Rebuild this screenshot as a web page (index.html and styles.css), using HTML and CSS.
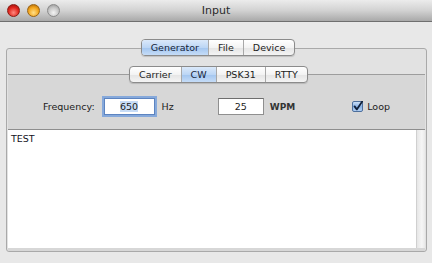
FILE: index.html
```html
<!DOCTYPE html>
<html lang="en">
<head>
    <meta charset="UTF-8">
    <title>Input</title>
    <link rel="stylesheet" href="styles.css">
</head>
<body>
    <div class="window">
        <header class="titlebar">
            <div class="lights">
                <span class="light red"></span>
                <span class="light yellow"></span>
                <span class="light grey"></span>
            </div>
            <div class="title">Input</div>
        </header>

        <main class="content">
            <div class="segmented outer-tabs">
                <span class="seg active">Generator</span>
                <span class="seg">File</span>
                <span class="seg">Device</span>
            </div>
            <div class="tabbox">
                <div class="segmented inner-tabs">
                    <span class="seg">Carrier</span>
                    <span class="seg active">CW</span>
                    <span class="seg">PSK31</span>
                    <span class="seg">RTTY</span>
                </div>
                <div class="panel">
                    <div class="form-row">
                        <label class="lbl freq-lbl">Frequency:</label>
                        <div class="field focused freq-field"><span class="sel">650</span></div>
                        <span class="unit hz">Hz</span>
                        <div class="field wpm-field">25</div>
                        <span class="unit wpm">WPM</span>
                        <div class="check">
                            <svg width="11" height="11" viewBox="0 0 11 11">
                                <defs>
                                    <linearGradient id="cb" x1="0" y1="0" x2="0" y2="1">
                                        <stop offset="0" stop-color="#d3e4f8"/>
                                        <stop offset="0.5" stop-color="#8ab3e6"/>
                                        <stop offset="1" stop-color="#b5d2f4"/>
                                    </linearGradient>
                                </defs>
                                <rect x="0.5" y="0.5" width="10" height="10" rx="1.5" fill="url(#cb)" stroke="#4d6f9c"/>
                                <path d="M2.6 5.4 L4.8 8.4 L10.2 0.6" fill="none" stroke="#10203a" stroke-width="1.8" stroke-linecap="round" stroke-linejoin="round"/>
                            </svg>
                            <span class="lbl">Loop</span>
                        </div>
                    </div>
                    <div class="textarea">
                        <div class="text">TEST</div>
                        <div class="scroll"></div>
                    </div>
                </div>
            </div>
        </main>
    </div>
</body>
</html>
```

FILE: styles.css
```css
/* --- base --- */
body {
    margin: 0;
    font-family: "DejaVu Sans", "Liberation Sans", sans-serif;
    font-size: 9.5px;
    color: #1c1c1c;
}

.window {
    width: 432px;
    height: 263px;
    background: #e8e8e8;
    display: flex;
    flex-direction: column;
    overflow: hidden;
}

/* --- title bar --- */
.titlebar {
    height: 21px;
    background: linear-gradient(#ececec, #d2d2d2 50%, #a9a9a9);
    border-bottom: 1px solid #6f6f6f;
    display: flex;
    align-items: center;
}
.lights {
    display: flex;
    gap: 7px;
    margin-left: 7px;
    margin-top: -1px;
}
.light {
    width: 13px;
    height: 13px;
    border-radius: 50%;
    box-sizing: border-box;
}
.light.red {
    background: radial-gradient(circle at 50% 70%, #ff8a80, #e0241c 55%, #8e0d08);
    border: 1px solid #8a1b14;
}
.light.yellow {
    background: radial-gradient(circle at 50% 70%, #ffe08a, #f2a41a 55%, #a05a06);
    border: 1px solid #9a6412;
}
.light.grey {
    background: radial-gradient(circle at 50% 70%, #f4f4f4, #c4c4c4 55%, #8d8d8d);
    border: 1px solid #8a8a8a;
}
.title {
    flex: 1;
    text-align: center;
    font-size: 11px;
    color: #2a2a2a;
    margin-right: 60px;
    margin-top: -1px;
}

/* --- content --- */
.content {
    flex: 1;
    display: flex;
    flex-direction: column;
    padding: 17px 5px 11px 6px;
}

/* --- segmented controls --- */
.segmented {
    align-self: center;
    display: flex;
    height: 15px;
    border: 1px solid #8b8b8b;
    border-radius: 4px;
    background: linear-gradient(#ffffff, #f3f3f3 50%, #e4e4e4 51%, #f4f4f4);
    box-shadow: 0 1px 1px rgba(0,0,0,0.15);
    position: relative;
    z-index: 1;
    overflow: hidden;
}
.seg {
    padding: 0 9px;
    line-height: 15px;
    border-left: 1px solid #a8a8a8;
    color: #222;
}
.seg:first-child {
    border-left: none;
}
.seg.active {
    background: linear-gradient(#dbe9fa, #bcd6f5 50%, #a2c5ef 51%, #c5dcf7);
    color: #15243a;
}
.outer-tabs {
    margin-left: 3px;
    margin-bottom: -8px;
}
.inner-tabs {
    margin-left: 4px;
    margin-bottom: -9px;
}

.tabbox {
    flex: 1;
    display: flex;
    flex-direction: column;
    padding-top: 17px;
    background: #e2e2e2;
    border: 1px solid #a9a9a9;
    border-radius: 3px;
}

.panel {
    flex: 1;
    display: flex;
    flex-direction: column;
    margin: 0 1px;
    padding-bottom: 3px;
    background: #d7d7d7;
    border-top: 1px solid #9d9d9d;
}

/* --- form row --- */
.form-row {
    display: flex;
    align-items: center;
    height: 19px;
    margin-top: 22px;
    margin-bottom: 13px;
}
.freq-lbl {
    margin-left: 35px;
}
.field {
    box-sizing: border-box;
    height: 17px;
    background: #fff;
    border: 1px solid #8f8f8f;
    border-top-color: #6e6e6e;
    text-align: center;
    line-height: 15px;
}
.freq-field {
    width: 51px;
    margin-left: 9px;
}
.field.focused {
    box-shadow: 0 0 0 2px #86a9db;
    border-color: #5d84c0;
}
.sel {
    background: #c7dcf6;
}
.wpm-field {
    width: 46px;
    margin-left: 44px;
}
.unit {
    margin-left: 7px;
}
.wpm {
    font-weight: bold;
    font-size: 9px;
    color: #333;
    margin-left: 6px;
}
.check {
    display: flex;
    align-items: center;
    gap: 4px;
    margin-left: 57px;
}

/* --- text area --- */
.textarea {
    flex: 1;
    display: flex;
    background: #fff;
    border-top: 1px solid #8e8e8e;
}
.text {
    flex: 1;
    padding: 3px 3px;
    font-size: 9.5px;
    color: #111122;
}
.scroll {
    width: 8px;
    background: linear-gradient(90deg, #e6e6e6, #f6f6f6 60%, #e9e9e9);
    border-left: 1px solid #d0d0d0;
}
```
